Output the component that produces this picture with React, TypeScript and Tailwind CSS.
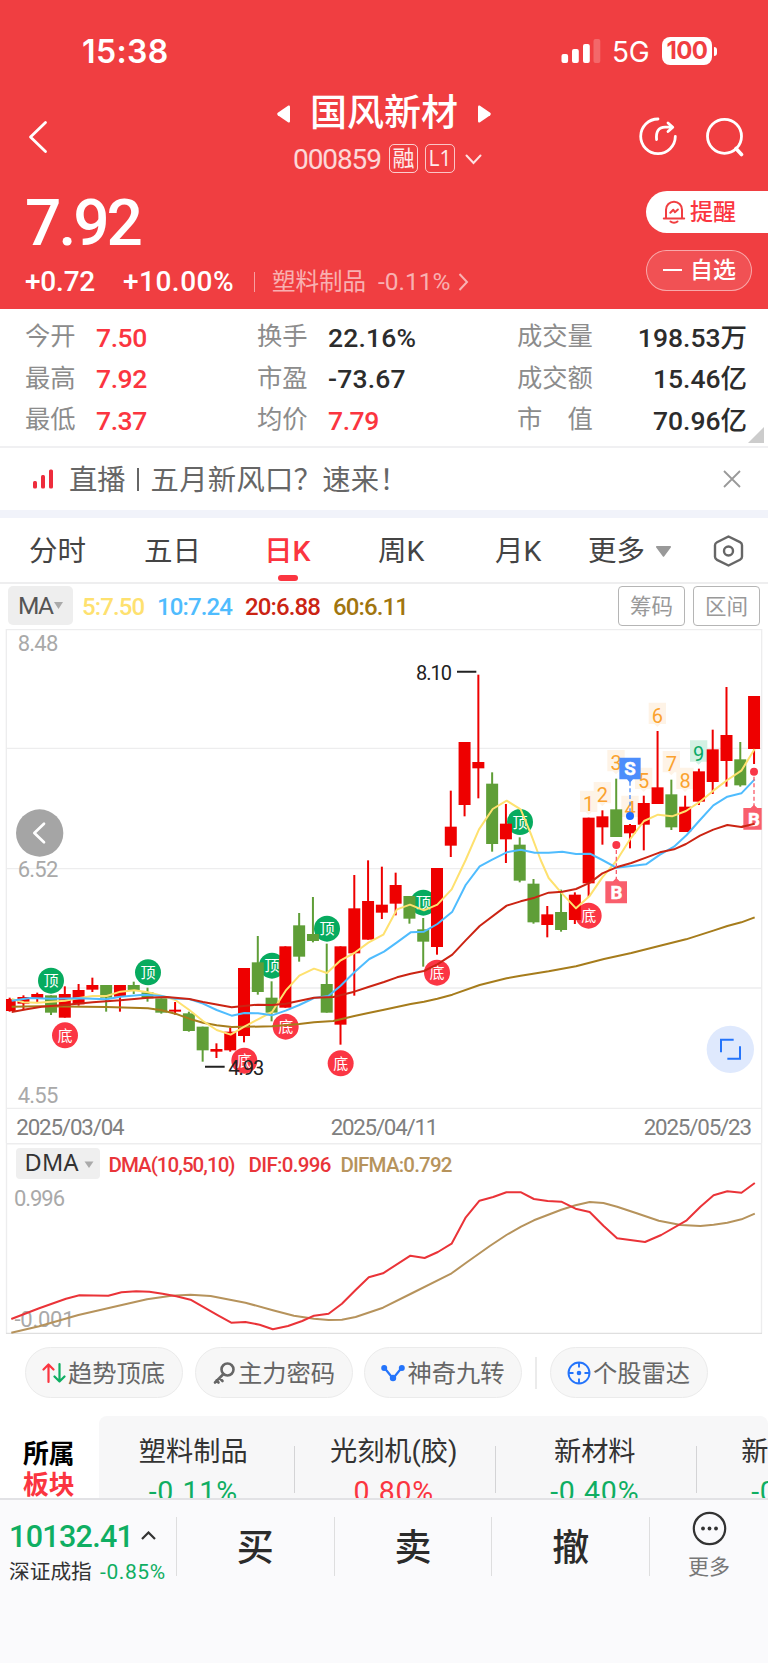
import { ReactNode } from 'react';
import clsx from 'clsx';

type Candle = [dir: 'r' | 'g', high: number, top: number, bottom: number, low: number];

// Chart units are a third of a pixel
const STEP = 41.355;
const FIRST_X = 29;

const CANDLES: Candle[] = [
  ['r', 1133, 1137, 1173, 1175],
  ['r', 1126, 1131, 1151, 1170],
  ['r', 1118, 1122, 1135, 1148],
  ['g', 1126, 1126, 1178, 1185],
  ['r', 1099, 1122, 1193, 1193],
  ['r', 1092, 1110, 1153, 1157],
  ['r', 1073, 1095, 1109, 1116],
  ['g', 1095, 1095, 1133, 1175],
  ['r', 1095, 1095, 1130, 1175],
  ['g', 1085, 1095, 1111, 1122],
  ['g', 1103, 1117, 1135, 1145],
  ['g', 1135, 1135, 1178, 1181],
  ['r', 1146, 1169, 1175, 1184],
  ['g', 1175, 1180, 1233, 1235],
  ['g', 1220, 1220, 1291, 1325],
  ['r', 1270, 1287, 1295, 1314],
  ['r', 1223, 1235, 1291, 1295],
  ['r', 1044, 1044, 1248, 1267],
  ['g', 948, 1027, 1116, 1124],
  ['g', 1084, 1133, 1178, 1204],
  ['r', 979, 979, 1163, 1163],
  ['g', 879, 916, 1010, 1025],
  ['g', 831, 942, 963, 967],
  ['g', 971, 1092, 1178, 1178],
  ['r', 979, 979, 1214, 1274],
  ['r', 765, 865, 1000, 1127],
  ['r', 721, 843, 959, 959],
  ['r', 740, 854, 878, 897],
  ['r', 758, 795, 851, 886],
  ['g', 828, 828, 896, 911],
  ['g', 894, 928, 965, 1040],
  ['r', 744, 744, 981, 1004],
  ['r', 512, 620, 677, 711],
  ['r', 366, 366, 555, 589],
  ['r', 164, 426, 445, 535],
  ['g', 457, 491, 672, 695],
  ['r', 552, 611, 658, 729],
  ['g', 652, 674, 782, 787],
  ['g', 777, 791, 907, 911],
  ['r', 858, 883, 915, 952],
  ['g', 809, 876, 930, 935],
  ['r', 817, 824, 900, 912],
  ['r', 593, 593, 790, 831],
  ['r', 571, 589, 622, 674],
  ['g', 476, 568, 651, 651],
  ['r', 612, 615, 640, 685],
  ['r', 527, 549, 614, 691],
  ['r', 333, 502, 552, 552],
  ['g', 479, 523, 622, 630],
  ['r', 527, 560, 636, 636],
  ['r', 446, 454, 545, 555],
  ['r', 329, 388, 486, 522],
  ['r', 201, 345, 423, 500],
  ['g', 366, 418, 496, 500],
  ['r', 228, 228, 387, 432],
];

const MA_LINES = [
  {
    color: '#a67c1c',
    points:
      '35,1160 120,1159 320,1161 444,1165 485,1171 526,1181 568,1196 609,1208 650,1216 695,1221 816,1219 898,1212 942,1207 1000,1203 1063,1188 1105,1179 1152,1169 1232,1152 1272,1145 1312,1136 1357,1124 1439,1095 1520,1075 1562,1067 1646,1054 1728,1039 1812,1017 1894,999 1980,977 2058,958 2140,932 2182,918 2224,907 2264,892',
  },
  {
    color: '#fee16f',
    points:
      '35,1137 71,1147 112,1148 153,1145 195,1142 237,1134 278,1128 320,1128 361,1115 403,1111 444,1117 485,1127 526,1140 568,1170 609,1203 650,1230 692,1244 733,1220 774,1198 816,1176 857,1112 898,1067 942,1046 981,1059 1022,1021 1063,999 1105,968 1150,944 1191,868 1230,854 1272,871 1312,854 1355,808 1397,720 1437,628 1478,567 1520,542 1562,568 1592,640 1622,720 1646,774 1683,817 1728,865 1768,829 1807,772 1849,723 1892,655 1932,603 1974,584 2016,589 2058,573 2100,545 2140,512 2182,480 2224,452 2264,387',
  },
  {
    color: '#4fbcfe',
    points:
      '35,1142 90,1134 153,1136 237,1135 320,1138 361,1130 430,1124 485,1128 526,1136 568,1137 609,1151 650,1170 695,1187 733,1179 774,1180 816,1186 857,1172 898,1155 942,1134 985,1128 1022,1097 1063,1057 1108,1017 1152,995 1191,967 1232,937 1272,935 1312,912 1357,875 1397,795 1439,739 1478,718 1520,697 1562,689 1604,698 1646,698 1687,695 1728,702 1770,701 1807,720 1849,743 1894,738 1938,733 1980,704 2022,680 2060,645 2100,600 2140,556 2182,530 2224,520 2264,478',
  },
  {
    color: '#cb2413',
    points:
      '35,1176 80,1168 125,1160 200,1154 278,1147 361,1141 444,1133 500,1131 568,1137 609,1146 695,1162 774,1154 816,1155 857,1151 942,1133 1000,1131 1063,1115 1105,1101 1152,1086 1191,1072 1232,1061 1272,1053 1312,1033 1357,1004 1397,961 1439,918 1520,857 1562,844 1604,833 1646,818 1687,815 1728,807 1770,788 1807,760 1849,742 1894,729 1938,713 1980,697 2022,688 2058,672 2100,647 2140,629 2182,615 2224,621 2264,611',
  },
];

const TURNS = [
  { text: '顶', x: 153, y: 1082 },
  { text: '顶', x: 444, y: 1057 },
  { text: '顶', x: 816, y: 1037 },
  { text: '顶', x: 981, y: 926 },
  { text: '顶', x: 1270, y: 848 },
  { text: '顶', x: 1560, y: 606 },
  { text: '底', x: 195, y: 1246 },
  { text: '底', x: 733, y: 1322 },
  { text: '底', x: 857, y: 1220 },
  { text: '底', x: 1022, y: 1330 },
  { text: '底', x: 1311, y: 1058 },
  { text: '底', x: 1766, y: 887 },
];

const COUNTS = [
  { n: 1, x: 1766, y: 544 },
  { n: 2, x: 1807, y: 518 },
  { n: 3, x: 1848, y: 422 },
  { n: 4, x: 1890, y: 559 },
  { n: 5, x: 1931, y: 475 },
  { n: 6, x: 1972, y: 280 },
  { n: 7, x: 2014, y: 425 },
  { n: 8, x: 2055, y: 475 },
  { n: 9, x: 2096, y: 393 },
];

const STATS = [
  ['今开', '7.50', '换手', '22.16%', '成交量', '198.53万'],
  ['最高', '7.92', '市盈', '-73.67', '成交额', '15.46亿'],
  ['最低', '7.37', '均价', '7.79', '市　值', '70.96亿'],
];

const SECTORS = [
  { name: '塑料制品', change: '-0.11%' },
  { name: '光刻机(胶)', change: '0.80%' },
  { name: '新材料', change: '-0.40%' },
  { name: '新能源车', change: '-0.62%' },
];

function StatusBar() {
  return (
    <div className="flex h-[76px] items-end pl-[82px] font-['Inter',sans-serif] text-white">
      <span className="w-[479px] text-[32px] leading-[48px] font-semibold tracking-[0.4px]">15:38</span>
      <svg width="40" height="48" viewBox="0 0 40 48" fill="#fff">
        <rect x="0.5" y="26" width="6.6" height="9" rx="2" />
        <rect x="11" y="21" width="6.8" height="14" rx="2" />
        <rect x="22" y="16" width="6.8" height="19" rx="2" />
        <rect x="32.5" y="11" width="6.8" height="24" rx="2" opacity="0.22" />
      </svg>
      <span className="ml-[11px] w-[50px] text-[28px] leading-[47px] tracking-[-0.3px]">5G</span>
      <div className="mb-[11px] flex items-center gap-[2px]">
        <span className="flex h-7 w-[50px] items-center justify-center rounded-[8px] bg-white text-[24px] font-bold tracking-[-0.6px] text-[#f03e41]">
          100
        </span>
        <span className="h-[9px] w-[2.5px] rounded-r-full bg-white" />
      </div>
    </div>
  );
}

function TitleBar() {
  return (
    <div className="flex h-[110px] items-start justify-between pl-[28px] pr-[24px] text-white">
      <svg className="mt-[44px]" width="20" height="34" viewBox="0 0 20 34" fill="none" stroke="#fff" strokeWidth="2.8" strokeLinecap="round" strokeLinejoin="round">
        <path d="M17.5 2.5 2.5 17l15 14.5" />
      </svg>
      <div className="ml-[82px] flex flex-col items-center">
        <div className="mt-[10px] flex h-[56px] items-center">
          <svg width="13" height="18" viewBox="0 0 13 18" fill="#fff">
            <path d="M11 .8c.9-.6 2 0 2 1v14.4c0 1-1.1 1.6-2 1L.8 10.2c-.8-.6-.8-1.8 0-2.4z" />
          </svg>
          <h1 className="mx-[20px] text-[37px] leading-[56px] font-medium">国风新材</h1>
          <svg width="13" height="18" viewBox="0 0 13 18" fill="#fff">
            <path d="M2 .8C1.1.2 0 .8 0 1.8v14.4c0 1 1.1 1.6 2 1l10.2-7c.8-.6.8-1.8 0-2.4z" />
          </svg>
        </div>
        <div className="mt-[2px] ml-[7px] flex h-[30px] items-center text-white/80">
          <span className="mt-[2px] w-[96px] text-[28px] leading-[30px] tracking-[-1.1px]">000859</span>
          <span className="mt-[-2px] flex h-[29px] w-[29px] items-center justify-center rounded-[5px] border-[1.5px] border-white/75 pt-px text-[22px] leading-none text-white/90">融</span>
          <span className="mt-[-2px] ml-[7px] flex h-[29px] w-[30px] items-center justify-center rounded-[5px] border-[1.5px] border-white/70 font-['Open_Sans',sans-serif] text-[21px] leading-none text-white/90">L1</span>
          <svg className="ml-[10px]" width="17" height="11" viewBox="0 0 17 11" fill="none" stroke="#fff" strokeOpacity="0.85" strokeWidth="2" strokeLinecap="round">
            <path d="m1.5 1.5 7 7.5 7-7.5" />
          </svg>
        </div>
      </div>
      <div className="mt-[41px] flex gap-[26px]">
        <svg width="40" height="40" viewBox="0 0 40 40" fill="none" stroke="#fff" strokeWidth="2.8" strokeLinecap="round" strokeLinejoin="round">
          <path d="M20 2A17.3 17.3 0 1 0 37.3 19.5" />
          <path d="M18.6 22.5c-.8-7.5 1.7-12.3 8.5-12.3h7M30 6l4.8 4.200L30 14.5" />
        </svg>
        <svg width="40" height="40" viewBox="0 0 40 40" fill="none" stroke="#fff" strokeWidth="2.8" strokeLinecap="round">
          <circle cx="20.5" cy="19.3" r="17" />
          <path d="m32 31.5 5.5 6" strokeWidth="3.6" />
        </svg>
      </div>
    </div>
  );
}

function PriceHeader() {
  return (
    <div className="flex h-[123px] justify-between pl-[25px] text-white">
      <div className="flex flex-col">
        <div className="mt-[5px] h-[65px] text-[64px] leading-[65px] font-medium tracking-[-3px]">7.92</div>
        <div className="mt-[10px] flex h-[32px] items-center text-[28px] leading-[32px] font-medium">
          <span className="w-[98px] tracking-[-0.2px]">+0.72</span>
          <span className="w-[131px] tracking-[0.5px]">+10.00%</span>
          <span className="h-5 w-px bg-white/50" />
          <span className="ml-[17px] flex items-center font-normal text-white/60">
            <span className="mt-[-1px] text-[23.5px]">塑料制品</span>
            <span className="ml-[12px] text-[24.5px]">-0.11%</span>
            <svg className="ml-[8px]" width="11" height="18" viewBox="0 0 11 18" fill="none" stroke="#fff" strokeOpacity="0.6" strokeWidth="2">
              <path d="m1.5 1 7.5 8-7.5 8" />
            </svg>
          </span>
        </div>
      </div>
      <div className="mt-[5px] flex w-[122px] flex-col gap-[17px] text-[23px] font-medium">
        <div className="flex h-[41.5px] items-center rounded-l-full bg-white pl-[16px] text-[#fb3540]">
          <svg width="24" height="24" viewBox="0 0 24 24" fill="none" stroke="#f03e41" strokeWidth="2" strokeLinecap="round" strokeLinejoin="round">
            <path d="M1.8 18.5h20.4M4 18V9.7a8 8 0 0 1 16 0V18M8.5 21.5c1.8 1.5 5.2 1.5 7 0" />
            <path d="m8.3 12.8 3-3 1.6 2.4 3-2.7" />
          </svg>
          <span className="mt-[2px] ml-[4px]">提醒</span>
        </div>
        <div className="flex h-[41.5px] w-[106px] items-center rounded-full border border-white/50 bg-white/10 pl-[16px]">
          <span className="h-[2px] w-[19px] bg-white" />
          <span className="mt-px ml-[8px]">自选</span>
        </div>
      </div>
    </div>
  );
}

function Stats() {
  return (
    <div className="flex h-[139px] items-end border-b-2 border-[#f0f0f2]">
      <div className="flex w-[747px] flex-col self-start pt-[7px] pl-[25px]">
        {STATS.map((row) => (
          <div key={row[0]} className="flex h-[41.5px] items-center text-[25.3px] leading-[41px] text-[#8c8c8c]">
            <span className="w-[71px]">{row[0]}</span>
            <span className="mt-px w-[161px] text-[26.5px] font-medium tracking-[-0.4px] text-[#fb3540]">{row[1]}</span>
            <span className="w-[71px]">{row[2]}</span>
            <span
              className={clsx(
                'mt-px w-[189px] text-[26.5px] font-medium',
                row[2] === '均价' ? 'tracking-[-0.4px] text-[#fb3540]' : 'tracking-[0.2px] text-[#2c2c2c]',
              )}
            >
              {row[3]}
            </span>
            <span className="w-[90px]">{row[4]}</span>
            <span className="mt-px flex-1 text-right text-[26.5px] font-medium text-[#2c2c2c]">{row[5]}</span>
          </div>
        ))}
      </div>
      <svg className="mb-[3px]" width="17" height="16" viewBox="0 0 17 16" fill="#ccc">
        <path d="M17 0v16H1z" />
      </svg>
    </div>
  );
}

function LiveBanner() {
  return (
    <div className="flex h-[62px] items-center pl-[33px] pr-[27px] text-[28.3px] text-[#666]">
      <svg width="20" height="20" viewBox="0 0 20 20" fill="#ee2c3c">
        <rect x="0" y="12" width="4" height="7.5" rx="1.5" />
        <rect x="8" y="6" width="4" height="13.5" rx="1.5" />
        <rect x="16" y="0.5" width="4" height="19" rx="1.5" />
      </svg>
      <span className="mt-[5px] ml-[16px]">直播</span>
      <span className="mx-[11px] h-[23px] w-[2px] bg-[#666]" />
      <span className="mt-[5px] ml-px flex-1 tracking-[0.3px]">五月新风口？速来！</span>
      <svg width="18" height="18" viewBox="0 0 18 18" fill="none" stroke="#999" strokeWidth="1.8">
        <path d="m1 1 16 16M17 1 1 17" />
      </svg>
    </div>
  );
}

function PeriodTabs() {
  return (
    <div className="flex h-[66px] items-center border-b-2 border-[#eeeeef] pt-[5px] pl-[29px] text-[28.5px] text-[#444]">
      <span className="w-[115px]">分时</span>
      <span className="w-[120px]">五日</span>
      <span className="relative w-[114px] font-medium text-[#fb3540]">
        日K
        <i className="absolute top-[44px] left-[14px] h-[6px] w-[20px] rounded-[3px] bg-[#fb3540]" />
      </span>
      <span className="w-[117px]">周K</span>
      <span className="w-[93px]">月K</span>
      <span className="w-[68px]">更多</span>
      <svg className="mt-[-2px]" width="15" height="11" viewBox="0 0 15 11" fill="#999">
        <path d="M1 0h13c.8 0 1.3.9.8 1.5l-6.500 8.800a1 1 0 0 1-1.600 0L.2 1.500C-.3.9.2 0 1 0z" />
      </svg>
      <svg className="mt-[-4px] ml-[42px]" width="31" height="32" viewBox="0 0 31 32" fill="none" stroke="#666" strokeWidth="2.4" strokeLinejoin="round">
        <path d="M15.5 1.5 27 7.2q2 1 2 3v11.600q0 2-2 3L15.5 30.5 4 24.8q-2-1-2-3V10.200q0-2 2-3z" />
        <circle cx="15.5" cy="16" r="4.5" />
      </svg>
    </div>
  );
}

function MaRow() {
  return (
    <div className="flex h-[45px] items-start pt-[2px] pl-[8px] text-[24px] font-medium">
      <div className="flex h-[39px] w-[65px] items-center rounded-[5px] bg-[#eee] pl-[10px] text-[#555]">
        <span className="w-[36px] pt-px text-[24.5px] font-normal tracking-[-1.5px]">MA</span>
        <svg width="9" height="7" viewBox="0 0 9 7" fill="#aaa">
          <path d="M0 0h9L4.5 7z" />
        </svg>
      </div>
      <span className="ml-[9px] w-[75px] leading-[42px] tracking-[-0.9px] text-[#fee16f]">5:7.50</span>
      <span className="w-[88px] leading-[42px] tracking-[-0.9px] text-[#4fbcfe]">10:7.24</span>
      <span className="w-[88px] leading-[42px] tracking-[-0.9px] text-[#cb2413]">20:6.88</span>
      <span className="flex-1 leading-[42px] tracking-[-0.9px] text-[#a1750f]">60:6.11</span>
      <div className="mr-[8px] flex gap-[8px] text-[21.5px] font-normal text-[#999]">
        <span className="flex h-[40px] w-[67px] items-center justify-center rounded-[4px] border-[1.5px] border-[#b5b5b5] pt-[3px]">筹码</span>
        <span className="flex h-[40px] w-[67px] items-center justify-center rounded-[4px] border-[1.5px] border-[#b5b5b5] pt-[3px]">区间</span>
      </div>
    </div>
  );
}

function CandleChart() {
  return (
    <svg className="block" width="768" height="514" viewBox="0 27 2304 1542">
      <defs>
        <clipPath id="plot">
          <rect x="18" y="27" width="2267" height="1542" />
        </clipPath>
      </defs>
      <g stroke="#ededee" strokeWidth="4" fill="none">
        <path d="M19 1569V29H2285V1569" />
        <path d="M19 385H2285M19 746H2285M19 1104H2285M19 1465H2285" />
      </g>
      <circle cx="119" cy="639" r="71" fill="#a5a5a5" />
      <path d="m132 611-29 28 29 28" fill="none" stroke="#fff" strokeWidth="8" strokeLinecap="round" strokeLinejoin="round" />
      <g fill="#a9a9a9" fontSize="66">
        <text x="53" y="93" textLength="122">8.48</text>
        <text x="53" y="771" textLength="122">6.52</text>
        <text x="53" y="1449" textLength="122">4.55</text>
      </g>
      <g fill="#808080" fontSize="67">
        <text x="49" y="1545" textLength="325">2025/03/04</text>
        <text x="992" y="1545" textLength="323">2025/04/11</text>
        <text x="1931" y="1545" textLength="325">2025/05/23</text>
      </g>

      <g clipPath="url(#plot)">
        {TURNS.map((m) => (
          <g key={m.x}>
            <circle cx={m.x} cy={m.y} r="39" fill={m.text === '顶' ? '#07ab5f' : '#fb3644'} />
            <text x={m.x} y={m.y + 17} fontSize="45" fill="#fff" textAnchor="middle">
              {m.text}
            </text>
          </g>
        ))}
        {COUNTS.map((c) => (
          <g key={c.n}>
            <path
              d={`M${c.x - 26} ${c.y - 32}h52v64h-17l-9 9-9-9h-17z`}
              fill={c.n === 9 ? '#d3f1e3' : '#fef3e6'}
            />
            <text x={c.x} y={c.y + 29} fontSize="60" textAnchor="middle" fill={c.n === 9 ? '#0aa966' : '#fba22e'}>
              {c.n}
            </text>
          </g>
        ))}
        {CANDLES.map(([dir, high, top, bottom, low], i) => {
          const x = FIRST_X + i * STEP;
          return (
            <g key={i} fill={dir === 'r' ? '#ee0000' : '#5f9e37'}>
              <rect x={x - 3} y={high} width="6" height={low - high} />
              <rect x={x - 18} y={top} width="36" height={bottom - top} />
            </g>
          );
        })}
        {MA_LINES.map((line) => (
          <polyline key={line.color} points={line.points} fill="none" stroke={line.color} strokeWidth="6" strokeLinejoin="round" />
        ))}

        {/* trade marks */}
        <g strokeWidth="4" strokeDasharray="12 8">
          <path d="M1890 485v90" stroke="#4c8dfb" />
          <path d="M1849 690v88M2262 470v90" stroke="#f95e6c" />
        </g>
        <path d="M1858 413h64v65h-23l-9 10-9-10h-23z" fill="#4c8dfb" />
        <circle cx="1890" cy="588" r="12" fill="#1c6bff" />
        <circle cx="1849" cy="675" r="12" fill="#f93647" />
        <circle cx="2262" cy="455" r="12" fill="#f93647" />
        <path d="M1816 784h23l10-10 10 10h22v66h-65z" fill="#f95e6c" />
        <path d="M2230 564h22l10-10 10 10h23v65h-65z" fill="#f95e6c" />
        <g fill="#fff" stroke="#fff" strokeWidth="1.5" fontSize="56" fontWeight="700" textAnchor="middle">
          <text x="1890" y="465">S</text>
          <text x="1849" y="837">B</text>
          <text x="2262" y="617">B</text>
        </g>
        <polyline points="2224,621 2264,611" stroke="#cb2413" strokeWidth="6" />
      </g>

      <g fill="#222" fontSize="60">
        <text x="1248" y="180" textLength="108">8.10</text>
        <text x="685" y="1365" textLength="108">4.93</text>
        <path d="M1371 155h58M615 1340h59" stroke="#222" strokeWidth="6" />
      </g>

      <circle cx="2191" cy="1288" r="71" fill="#dfe9fd" />
      <path d="M2201 1259h-38v38M2220 1279v37h-38" fill="none" stroke="#2474fb" strokeWidth="6" />
    </svg>
  );
}

function DmaChart() {
  return (
    <svg className="block" width="768" height="191" viewBox="0 1143 768 191">
      <path d="M6.5 1143.7H761.5M6.5 1143V1333.5M761.5 1143V1333.5" stroke="#ededee" strokeWidth="1.4" />
      <path d="M6 1333.4H762" stroke="#dfdfdf" strokeWidth="1.2" />
      <rect x="16" y="1148" width="84" height="31" rx="4" fill="#efefef" />
      <text x="24.5" y="1171" fontSize="23.5" fill="#333" fontFamily="Noto Sans" textLength="54">DMA</text>
      <path d="M84.5 1161.5h9l-4.5 6.5z" fill="#aaa" />
      <g fontSize="20.5" fontWeight="500">
        <text x="108.5" y="1172" fill="#e9353a" textLength="127">DMA(10,50,10)</text>
        <text x="248.5" y="1172" fill="#e9353a" textLength="83">DIF:0.996</text>
        <text x="340.5" y="1172" fill="#b6935c" textLength="112">DIFMA:0.792</text>
      </g>
      <g fontSize="22" fill="#a9a9a9">
        <text x="14" y="1206" textLength="51">0.996</text>
        <text x="14.5" y="1327" textLength="60">-0.001</text>
      </g>
      <g fill="none" strokeWidth="2" strokeLinejoin="round">
        <polyline
          stroke="#b6935c"
          points="11.3,1332.7 39.2,1326.3 78.4,1315 117.5,1306 147,1299.3 171.4,1295.7 190.5,1294.7 210.6,1296 245.4,1302.7 272.8,1310.3 293.9,1315.7 314,1318.7 328.6,1320 341.9,1319.7 355.6,1317 383,1307.7 410.4,1294 451.6,1273.3 465.8,1263 489.8,1246 506.4,1235 521.1,1226.7 533.9,1220.3 561.3,1209.7 575.5,1205.3 589.7,1202 603.4,1203 617.1,1206.7 636.7,1213.3 658.8,1220.7 680.8,1225 700.4,1226 713.6,1224.7 727.3,1222.7 741.5,1219.3 754.8,1213.7"
        />
        <polyline
          stroke="#ea3338"
          points="11.3,1319 39.2,1308.3 66,1298.7 79.4,1295.3 108.3,1295.7 121.5,1292.3 136.2,1291.3 149.4,1291.7 162.6,1293.7 176.3,1296.3 190.5,1299.7 218,1315.3 231.2,1322.7 245.4,1322 259.6,1324.7 272.8,1329.3 288,1326 302.2,1321 314,1315.7 328.6,1313.7 341.9,1303.7 355.6,1290 368.8,1277.3 383,1273.3 410.4,1255.7 424.6,1258 437.9,1252 451.6,1243.7 465.8,1217.3 479.5,1200.7 493.2,1197 506.4,1192.3 521.1,1192.3 533.9,1199 547.6,1201 561.3,1201.7 575.5,1208.7 589.7,1212 603.4,1225.7 617.1,1238.3 645,1242 661.2,1235 686.7,1220.3 700.4,1206.7 713.6,1195.3 727.3,1191.3 741.5,1192.7 754.8,1183"
        />
      </g>
    </svg>
  );
}

function Chip({ icon, label }: { icon: ReactNode; label: string }) {
  return (
    <div className="flex h-[51px] w-[158px] shrink-0 items-center justify-center gap-[2px] rounded-full border-[1.5px] border-[#ebebeb] bg-[#f7f7f7] text-[24.3px] text-[#666]">
      {icon}
      <span className="mt-[3px]">{label}</span>
    </div>
  );
}

function ToolChips() {
  return (
    <div className="flex h-[82px] items-start pt-[13px] pl-[24.5px]">
      <Chip
        label="趋势顶底"
        icon={
          <svg width="24" height="22" viewBox="0 0 24 22" fill="none" strokeWidth="2.2" strokeLinecap="round" strokeLinejoin="round">
            <path d="M6.5 20V2.5M1.5 7.5l5-5 5 5" stroke="#fb3540" />
            <path d="M17.5 2v17.5M12.5 14.5l5 5 5-5" stroke="#0fae62" />
          </svg>
        }
      />
      <div className="w-[12px]" />
      <Chip
        label="主力密码"
        icon={
          <svg width="24" height="24" viewBox="0 0 24 24" fill="none" stroke="#666" strokeWidth="2.6" strokeLinecap="round">
            <circle cx="15.5" cy="8.5" r="6" />
            <path d="M11.5 13 3 21.5M7.5 17l3 3M4.5 19.5l2 2" />
          </svg>
        }
      />
      <div className="w-[11.5px]" />
      <Chip
        label="神奇九转"
        icon={
          <svg width="24" height="18" viewBox="0 0 24 18" fill="#2474fb">
            <path d="M3.5 4 12 14.5 20.5 4" fill="none" stroke="#2474fb" strokeWidth="2.2" />
            <circle cx="3.2" cy="4" r="3" />
            <circle cx="12" cy="14" r="3.2" />
            <circle cx="20.8" cy="4" r="3" />
          </svg>
        }
      />
      <div className="mt-[10px] mr-[13px] ml-[13px] h-[32px] w-[1.5px] bg-[#ebebeb]" />
      <Chip
        label="个股雷达"
        icon={
          <svg width="24" height="24" viewBox="0 0 24 24" fill="none" stroke="#2474fb" strokeWidth="1.9">
            <circle cx="12" cy="12" r="10.5" />
            <path d="M12 1.5v5M12 17.5v5M1.5 12h5M17.5 12h5" />
            <circle cx="12" cy="12" r="2.3" fill="#2474fb" stroke="none" />
          </svg>
        }
      />
    </div>
  );
}

function Sectors() {
  return (
    <div className="flex h-[82px] overflow-hidden">
      <div className="w-[99px] shrink-0 pt-[23px] pl-[23px] text-[25.8px] leading-[31px] font-bold">
        <div className="text-black">所属</div>
        <div className="text-[#fb3540]">板块</div>
      </div>
      <div className="flex h-[120px] w-[669px] shrink-0 overflow-hidden rounded-[8px] bg-[#f7f7f8]">
        {SECTORS.map((s, i) => (
          <div key={s.name} className={clsx('flex shrink-0 items-start', i === 0 ? 'w-[196px]' : 'w-[201px]')}>
            <div className={clsx('flex flex-1 flex-col items-center pt-[16px]', i === 0 ? 'pr-[6px]' : 'pr-[2px]')}>
              <span className="text-[27.2px] leading-[40px] text-[#333]">{s.name}</span>
              <span
                className={clsx(
                  'mt-[4px] text-[28.5px] leading-[32px] tracking-[0.8px]',
                  s.change.startsWith('-') ? 'text-[#0fae62]' : 'text-[#fb3540]',
                )}
              >
                {s.change}
              </span>
            </div>
            <div className="mt-[30px] h-[47px] w-[1.5px] bg-[#d4d4d6]" />
          </div>
        ))}
      </div>
    </div>
  );
}

function TradeBar() {
  return (
    <div className="flex h-[165px] items-start border-t-2 border-[#e2e2e5] bg-[#fafafc]">
      <div className="w-[176px] shrink-0 pl-[9px]">
        <div className="flex h-[36px] items-center pt-[37px] text-[30.5px] leading-[36px] font-medium tracking-[-0.7px] text-[#0fae62]">
          <span className="w-[132px]">10132.41</span>
          <svg className="mt-[-3px]" width="15" height="9" viewBox="0 0 15 9" fill="none" stroke="#333" strokeWidth="2.2">
            <path d="m1 8 6.5-6.5L14 8" />
          </svg>
        </div>
        <div className="mt-[20px] flex items-center text-[20.7px] leading-[30px] whitespace-nowrap text-[#333]">
          <span className="w-[91px]">深证成指</span>
          <span className="text-[21px] tracking-[0.6px] text-[#0fae62]">-0.85%</span>
        </div>
      </div>
      {['买', '卖', '撤'].map((label) => (
        <div key={label} className="mt-[17px] flex h-[59px] w-[157.7px] shrink-0 items-center justify-center border-l-[1.5px] border-[#dededf] pt-[5px] text-[37px] font-medium text-[#2b2b2b]">
          {label}
        </div>
      ))}
      <div className="mt-[17px] h-[59px] w-px bg-[#dededf]" />
      <div className="flex flex-1 flex-col items-center pt-[11px]">
        <svg width="35" height="35" viewBox="0 0 35 35" fill="#333">
          <circle cx="17.5" cy="17.5" r="15.7" fill="none" stroke="#333" strokeWidth="2.2" />
          <circle cx="11" cy="17.5" r="1.9" />
          <circle cx="17.5" cy="17.5" r="1.9" />
          <circle cx="24" cy="17.5" r="1.9" />
        </svg>
        <span className="mt-[5px] text-[21px] leading-[32px] text-[#777]">更多</span>
      </div>
    </div>
  );
}

export default function App() {
  return (
    <div className="h-[1663px] w-[768px] overflow-hidden bg-white font-['Roboto','Noto_Sans_CJK_SC',sans-serif]">
      <header className="h-[309px] bg-[#f03e41]">
        <StatusBar />
        <TitleBar />
        <PriceHeader />
      </header>
      <Stats />
      <LiveBanner />
      <div className="h-[8px] bg-[#f1f3fa]" />
      <PeriodTabs />
      <MaRow />
      <CandleChart />
      <DmaChart />
      <ToolChips />
      <Sectors />
      <TradeBar />
    </div>
  );
}
